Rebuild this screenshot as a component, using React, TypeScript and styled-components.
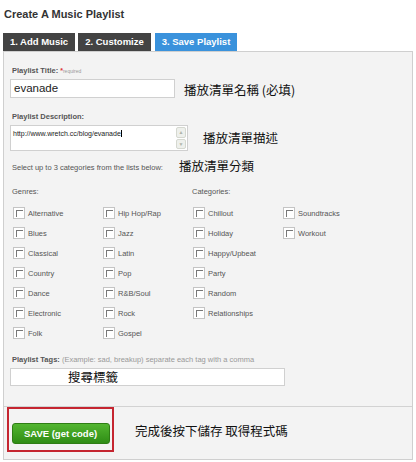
import React from "react";
import styled, { createGlobalStyle } from "styled-components";

const Global = createGlobalStyle`
  html, body { margin: 0; padding: 0; background: #fff; }
  body { font-family: "Liberation Sans", Arial, sans-serif; }
`;

const Page = styled.div`
  width: 416px;
  height: 462px;
  overflow: hidden;
  position: relative;
`;

const Heading = styled.h1`
  margin: 0;
  padding: 7px 0 0 4px;
  height: 26px;
  box-sizing: border-box;
  font-size: 11px;
  line-height: 14px;
  font-weight: bold;
  color: #333;
`;

const Tabs = styled.div`
  display: flex;
  margin: 7px 0 0 3px;
  height: 18px;
`;

const Tab = styled.div<{ $active?: boolean; $w: number; $gap: number }>`
  width: ${(p) => p.$w}px;
  margin-right: ${(p) => p.$gap}px;
  background: ${(p) => (p.$active ? "#3a92dc" : "#434343")};
  color: #fff;
  font-size: 9.5px;
  font-weight: bold;
  line-height: 18px;
  text-align: center;
`;

const Panel = styled.div`
  margin-left: 3px;
  width: 410px;
  height: 409px;
  box-sizing: border-box;
  background: #f3f3f3;
  border: 1px solid #cfcfcf;
  display: flex;
  flex-direction: column;
`;

const FormArea = styled.div`
  padding: 0 6px;
  height: 354px;
  border-bottom: 1px solid #d2d2d2;
`;

const Label = styled.div<{ $top: number }>`
  margin: ${(p) => p.$top}px 0 0 2px;
  font-size: 7.5px;
  line-height: 10px;
  font-weight: bold;
  color: #555;
`;

const Req = styled.span`
  font-weight: normal;
  color: #999;
  font-size: 5px;
  & b { color: #d33; font-size: 7px; }
`;

const Hint = styled.span`
  font-weight: normal;
  color: #999;
`;

const Row = styled.div<{ $top: number }>`
  display: flex;
  align-items: center;
  margin-top: ${(p) => p.$top}px;
`;

const TextInput = styled.div<{ $w: number; $h: number }>`
  width: ${(p) => p.$w}px;
  height: ${(p) => p.$h}px;
  box-sizing: border-box;
  background: #fff;
  border: 1px solid #d0d0d0;
  font-size: 11.5px;
  line-height: ${(p) => p.$h - 2}px;
  padding-left: 3px;
  color: #222;
  position: relative;
`;

const Zh = styled.span<{ $left: number; $dy?: number }>`
  font-family: "Noto Sans CJK TC", "Noto Sans CJK SC", sans-serif;
  font-size: 12.5px;
  color: #111;
  margin-left: ${(p) => p.$left}px;
  position: relative;
  top: ${(p) => p.$dy || 0}px;
  white-space: nowrap;
`;

const Area = styled.div`
  width: 178px;
  height: 26px;
  box-sizing: border-box;
  background: #fff;
  border: 1px solid #d0d0d0;
  display: flex;
  font-size: 7px;
  color: #222;
`;

const AreaText = styled.div`
  flex: 1;
  padding: 3px 0 0 2px;
  line-height: 9px;
`;

const Caret = styled.span`
  border-right: 1px solid #000;
`;

const Scroll = styled.div`
  width: 10px;
  margin: 1px 1px 1px 0;
  display: flex;
  flex-direction: column;
  gap: 1px;
`;

const ScrollBtn = styled.div`
  flex: 1;
  background: #eef0ec;
  border: 1px solid #d5d8d0;
  border-radius: 2px;
  display: flex;
  align-items: center;
  justify-content: center;
  font-size: 5px;
  color: #b0b4aa;
`;

const Small = styled.div<{ $top: number }>`
  font-size: 7.5px;
  color: #555;
  margin: ${(p) => p.$top}px 0 0 2px;
  display: flex;
  align-items: center;
`;

const Groups = styled.div`
  display: flex;
  margin-top: 10px;
`;

const Group = styled.div`
  width: 180px;
`;

const GroupTitle = styled.div`
  font-size: 7.5px;
  color: #555;
  line-height: 10px;
  padding-left: 2px;
`;

const Cols = styled.div`
  display: flex;
  margin-top: 6px;
`;

const Col = styled.div`
  width: 90px;
  display: flex;
  flex-direction: column;
`;

const Item = styled.label`
  display: flex;
  align-items: center;
  height: 20px;
  padding-left: 3px;
  font-size: 7.5px;
  color: #555;
`;

const Box = styled.span`
  width: 12px;
  height: 12px;
  box-sizing: border-box;
  border: 1px solid #c4c4c4;
  background: #fff;
  margin-right: 3px;
  position: relative;
  &::after {
    content: "";
    position: absolute;
    left: 2px;
    top: 2px;
    width: 6px;
    height: 6px;
    border-left: 1px solid #777;
    border-top: 1px solid #777;
  }
`;

const SaveArea = styled.div`
  display: flex;
  align-items: flex-start;
  padding-left: 3px;
`;

const RedBox = styled.div`
  width: 107px;
  height: 45px;
  box-sizing: border-box;
  border: 2px solid #c52530;
  display: flex;
  align-items: center;
  justify-content: center;
  padding-top: 7px;
`;

const SaveButton = styled.button`
  width: 98px;
  height: 21px;
  border: 1px solid #2e7d14;
  border-radius: 3px;
  background: linear-gradient(#52b530, #2f8d15);
  color: #fff;
  font-family: "Liberation Sans", Arial, sans-serif;
  font-weight: bold;
  font-size: 9.5px;
  padding: 0;
`;

const genres1 = ["Alternative", "Blues", "Classical", "Country", "Dance", "Electronic", "Folk"];
const genres2 = ["Hip Hop/Rap", "Jazz", "Latin", "Pop", "R&B/Soul", "Rock", "Gospel"];
const cats1 = ["Chillout", "Holiday", "Happy/Upbeat", "Party", "Random", "Relationships"];
const cats2 = ["Soundtracks", "Workout"];

const Column = ({ items }: { items: string[] }) => (
  <Col>
    {items.map((t) => (
      <Item key={t}>
        <Box />
        {t}
      </Item>
    ))}
  </Col>
);

export default function App() {
  return (
    <Page>
      <Global />
      <Heading>Create A Music Playlist</Heading>
      <Tabs>
        <Tab $w={72} $gap={3}>1. Add Music</Tab>
        <Tab $w={73} $gap={4}>2. Customize</Tab>
        <Tab $w={82} $gap={0} $active>3. Save Playlist</Tab>
      </Tabs>
      <Panel>
        <FormArea>
          <Label $top={14}>
            Playlist Title: <Req><b>*</b>required</Req>
          </Label>
          <Row $top={3}>
            <TextInput $w={165} $h={19}>evanade</TextInput>
            <Zh $left={9} $dy={1}>播放清單名稱 (必填)</Zh>
          </Row>
          <Label $top={14}>Playlist Description:</Label>
          <Row $top={3}>
            <Area>
              <AreaText>
                <Caret>http://www.wretch.cc/blog/evanade</Caret>
              </AreaText>
              <Scroll>
                <ScrollBtn>▲</ScrollBtn>
                <ScrollBtn>▼</ScrollBtn>
              </Scroll>
            </Area>
            <Zh $left={15} $dy={-1}>播放清單描述</Zh>
          </Row>
          <Small $top={7}>
            Select up to 3 categories from the lists below:
            <Zh $left={16} $dy={-2}>播放清單分類</Zh>
          </Small>
          <Groups>
            <Group>
              <GroupTitle>Genres:</GroupTitle>
              <Cols>
                <Column items={genres1} />
                <Column items={genres2} />
              </Cols>
            </Group>
            <Group>
              <GroupTitle>Categories:</GroupTitle>
              <Cols>
                <Column items={cats1} />
                <Column items={cats2} />
              </Cols>
            </Group>
          </Groups>
          <Label $top={12}>
            Playlist Tags: <Hint>(Example: sad, breakup) separate each tag with a comma</Hint>
          </Label>
          <Row $top={3}>
            <TextInput $w={275} $h={18}>
              <Zh $left={54} $dy={0}>搜尋標籤</Zh>
            </TextInput>
          </Row>
        </FormArea>
        <SaveArea>
          <RedBox>
            <SaveButton>SAVE (get code)</SaveButton>
          </RedBox>
          <Zh $left={21} $dy={14}>完成後按下儲存 取得程式碼</Zh>
        </SaveArea>
      </Panel>
    </Page>
  );
}
